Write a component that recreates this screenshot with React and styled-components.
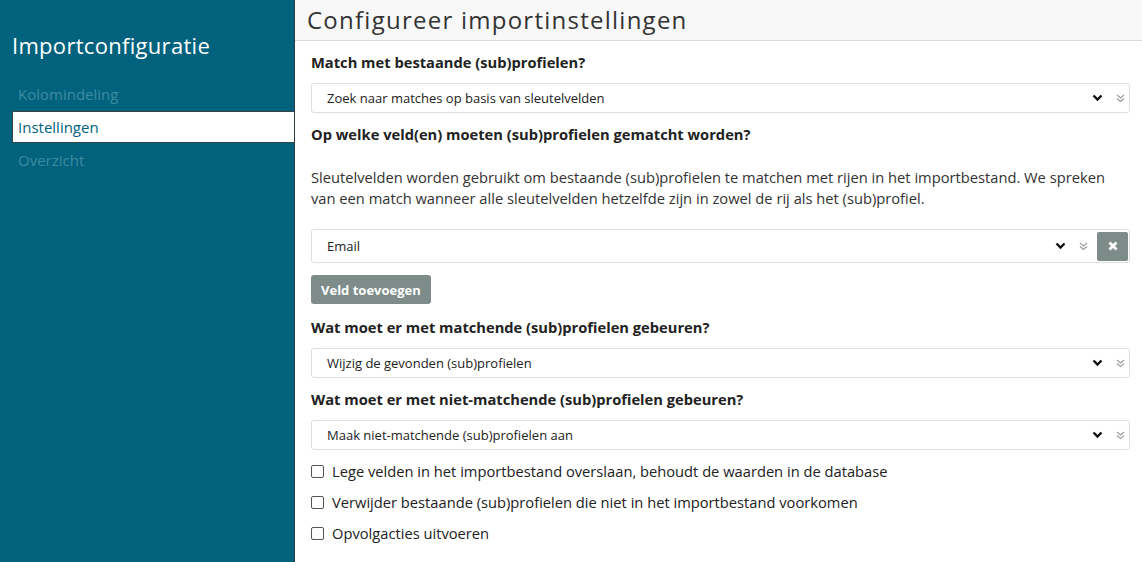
import React from 'react'
import styled, { createGlobalStyle } from 'styled-components'

const GlobalStyle = createGlobalStyle`
    html, body {
        margin: 0;
        padding: 0;
        background: #fff;
        font-family: "Open Sans", "Noto Sans", sans-serif;
        color: #222;
    }
    * { box-sizing: border-box; }
`

const Page = styled.div`
    display: flex;
    height: 562px;
    overflow: hidden;
`

const Sidebar = styled.aside`
    width: 295px;
    flex-shrink: 0;
    background: #00627d;
    border-right: 1px solid #2d3b40;
    padding-top: 29px;
`

const SideTitle = styled.h1`
    margin: 0 0 17px 12px;
    font-size: 22px;
    font-weight: 400;
    line-height: 32px;
    letter-spacing: 0.3px;
    color: #fff;
`

const NavList = styled.ul`
    list-style: none;
    margin: 0;
    padding: 0 0 0 12px;
`

const NavItem = styled.li`
    height: 32px;
    line-height: 31px;
    padding-left: 5px;
    font-size: 15px;
    margin-bottom: 1px;
    color: ${p => (p.$active ? '#00627d' : '#3f8aa1')};
    background: ${p => (p.$active ? '#fff' : 'transparent')};
    border: 1px solid ${p => (p.$active ? '#3a4446' : 'transparent')};
    border-right: none;
`

const Main = styled.main`
    flex: 1;
    min-width: 0;
`

const Header = styled.header`
    height: 41px;
    background: #f8f8f8;
    border-bottom: 1px solid #dcdcdc;
    padding-left: 12px;
`

const PageTitle = styled.h2`
    margin: 0;
    font-size: 24px;
    font-weight: 400;
    line-height: 40px;
    letter-spacing: 1.25px;
    color: #333;
`

const Content = styled.div`
    padding: 11px 12px 0 16px;
`

const Label = styled.div`
    font-size: 14.7px;
    font-weight: 700;
    line-height: 21px;
    color: #222;
    margin-top: ${p => p.$top || 0}px;
`

const Paragraph = styled.p`
    margin: 22px 0 0;
    font-size: 14.7px;
    line-height: 21px;
    color: #333;
`

const SelectBox = styled.div`
    display: flex;
    align-items: center;
    height: ${p => p.$h || 30}px;
    margin-top: ${p => p.$top || 10}px;
    border: 1px solid #dedede;
    border-radius: 3px;
    padding: 0 ${p => (p.$tight ? 1 : 4)}px 0 15px;
    font-size: 13px;
    color: #222;
    background: #fff;
`

const SelectText = styled.span`
    flex: 1;
`

const Icons = styled.span`
    display: flex;
    align-items: center;
    gap: 13px;
    margin-right: ${p => p.$mr || 0}px;
`

const RemoveButton = styled.button`
    width: 31px;
    height: 29px;
    border: none;
    border-radius: 2px;
    background: #7d8c89;
    display: flex;
    align-items: center;
    justify-content: center;
    padding: 0;
`

const AddButton = styled.button`
    display: block;
    margin-top: 12px;
    height: 29px;
    padding: 0 10px;
    border: none;
    border-radius: 3px;
    background: #7d8c89;
    color: #fff;
    font-family: "Open Sans", sans-serif;
    font-size: 13px;
    font-weight: 700;
`

const CheckList = styled.div`
    margin-top: 11px;
    display: flex;
    flex-direction: column;
    gap: 10px;
`

const CheckRow = styled.label`
    display: flex;
    align-items: center;
    gap: 8px;
    font-size: 14.7px;
    line-height: 21px;
    color: #222;
`

const Box = styled.span`
    width: 13px;
    height: 13px;
    border: 1px solid #555;
    border-radius: 2px;
    background: #fff;
`

const Chevron = () => (
    <svg width="11" height="8" viewBox="0 0 11 8">
        <path d="M1.5 1.5 L5.5 5.5 L9.5 1.5" fill="none" stroke="#111" strokeWidth="2.4" />
    </svg>
)

const DoubleChevron = () => (
    <svg width="9" height="9" viewBox="0 0 9 9">
        <path d="M1 1 L4.5 4 L8 1 M1 4.5 L4.5 7.5 L8 4.5" fill="none" stroke="#9a9a9a" strokeWidth="1.1" />
    </svg>
)

const Cross = () => (
    <svg width="10" height="10" viewBox="0 0 10 10">
        <path d="M1.5 1.5 L8.5 8.5 M8.5 1.5 L1.5 8.5" stroke="#fff" strokeWidth="2.8" />
    </svg>
)

function Select({ value, top, children, h, tight, mr }) {
    return (
        <SelectBox $top={top} $h={h} $tight={tight}>
            <SelectText>{value}</SelectText>
            <Icons $mr={mr}>
                <Chevron />
                <DoubleChevron />
            </Icons>
            {children}
        </SelectBox>
    )
}

export default function App() {
    return (
        <Page>
            <GlobalStyle />
            <Sidebar>
                <SideTitle>Importconfiguratie</SideTitle>
                <NavList>
                    <NavItem>Kolomindeling</NavItem>
                    <NavItem $active>Instellingen</NavItem>
                    <NavItem>Overzicht</NavItem>
                </NavList>
            </Sidebar>
            <Main>
                <Header>
                    <PageTitle>Configureer importinstellingen</PageTitle>
                </Header>
                <Content>
                    <Label>Match met bestaande (sub)profielen?</Label>
                    <Select value="Zoek naar matches op basis van sleutelvelden" />

                    <Label $top={11}>Op welke veld(en) moeten (sub)profielen gematcht worden?</Label>
                    <Paragraph>
                        Sleutelvelden worden gebruikt om bestaande (sub)profielen te matchen met rijen in het importbestand. We spreken
                        van een match wanneer alle sleutelvelden hetzelfde zijn in zowel de rij als het (sub)profiel.
                    </Paragraph>
                    <Select value="Email" top={20} h={34} tight mr={9}>
                        <RemoveButton><Cross /></RemoveButton>
                    </Select>
                    <AddButton>Veld toevoegen</AddButton>

                    <Label $top={13}>Wat moet er met matchende (sub)profielen gebeuren?</Label>
                    <Select value="Wijzig de gevonden (sub)profielen" />

                    <Label $top={11}>Wat moet er met niet-matchende (sub)profielen gebeuren?</Label>
                    <Select value="Maak niet-matchende (sub)profielen aan" />

                    <CheckList>
                        <CheckRow><Box />Lege velden in het importbestand overslaan, behoudt de waarden in de database</CheckRow>
                        <CheckRow><Box />Verwijder bestaande (sub)profielen die niet in het importbestand voorkomen</CheckRow>
                        <CheckRow><Box />Opvolgacties uitvoeren</CheckRow>
                    </CheckList>
                </Content>
            </Main>
        </Page>
    )
}
